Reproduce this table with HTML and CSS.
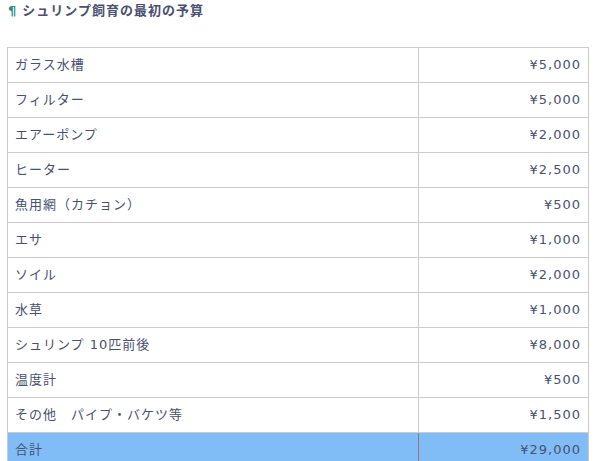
FILE: index.html
```html
<!DOCTYPE html>
<html lang="ja">
<head>
<meta charset="utf-8">
<link rel="stylesheet" href="styles.css">
</head>
<body>
<h4 class="title"><span class="pilcrow">¶</span>シュリンプ飼育の最初の予算</h4>
<table class="budget">
<tbody>
<tr><td>ガラス水槽</td><td class="num">¥5,000</td></tr>
<tr><td>フィルター</td><td class="num">¥5,000</td></tr>
<tr><td>エアーポンプ</td><td class="num">¥2,000</td></tr>
<tr><td>ヒーター</td><td class="num">¥2,500</td></tr>
<tr><td>魚用網（カチョン）</td><td class="num">¥500</td></tr>
<tr><td>エサ</td><td class="num">¥1,000</td></tr>
<tr><td>ソイル</td><td class="num">¥2,000</td></tr>
<tr><td>水草</td><td class="num">¥1,000</td></tr>
<tr><td>シュリンプ 10匹前後</td><td class="num">¥8,000</td></tr>
<tr><td>温度計</td><td class="num">¥500</td></tr>
<tr><td>その他　パイプ・バケツ等</td><td class="num">¥1,500</td></tr>
<tr class="total"><td>合計</td><td class="num">¥29,000</td></tr>
</tbody>
</table>
</body>
</html>
```
FILE: styles.css
```css
html, body {
  margin: 0;
  padding: 0;
  background: #ffffff;
}
body {
  font-family: "DejaVu Sans", "Noto Sans CJK JP", sans-serif;
  color: #4a5070;
  font-size: 13px;
  letter-spacing: 1px;
}
.title {
  margin: 0;
  padding: 2px 0 0 8px;
  height: 47px;
  box-sizing: border-box;
  font-size: 13px;
  font-weight: bold;
  color: #4a5070;
  line-height: 18px;
}
.pilcrow {
  color: #2f8f7f;
  margin-right: 6px;
  letter-spacing: 0;
}
.budget {
  margin: 0 0 0 7px;
  width: 582px;
  border-collapse: collapse;
}
.budget td {
  border: 1px solid #cccccc;
  height: 35px;
  padding: 0 7px;
  box-sizing: border-box;
  vertical-align: middle;
  line-height: 18px;
  font-weight: normal;
}
.budget td:first-child {
  width: 411px;
}
.budget .num {
  text-align: right;
}
.budget .total td {
  background: #80bdf7;
}
.budget .total td:first-child {
  border-right-color: #857f78;
}
```
